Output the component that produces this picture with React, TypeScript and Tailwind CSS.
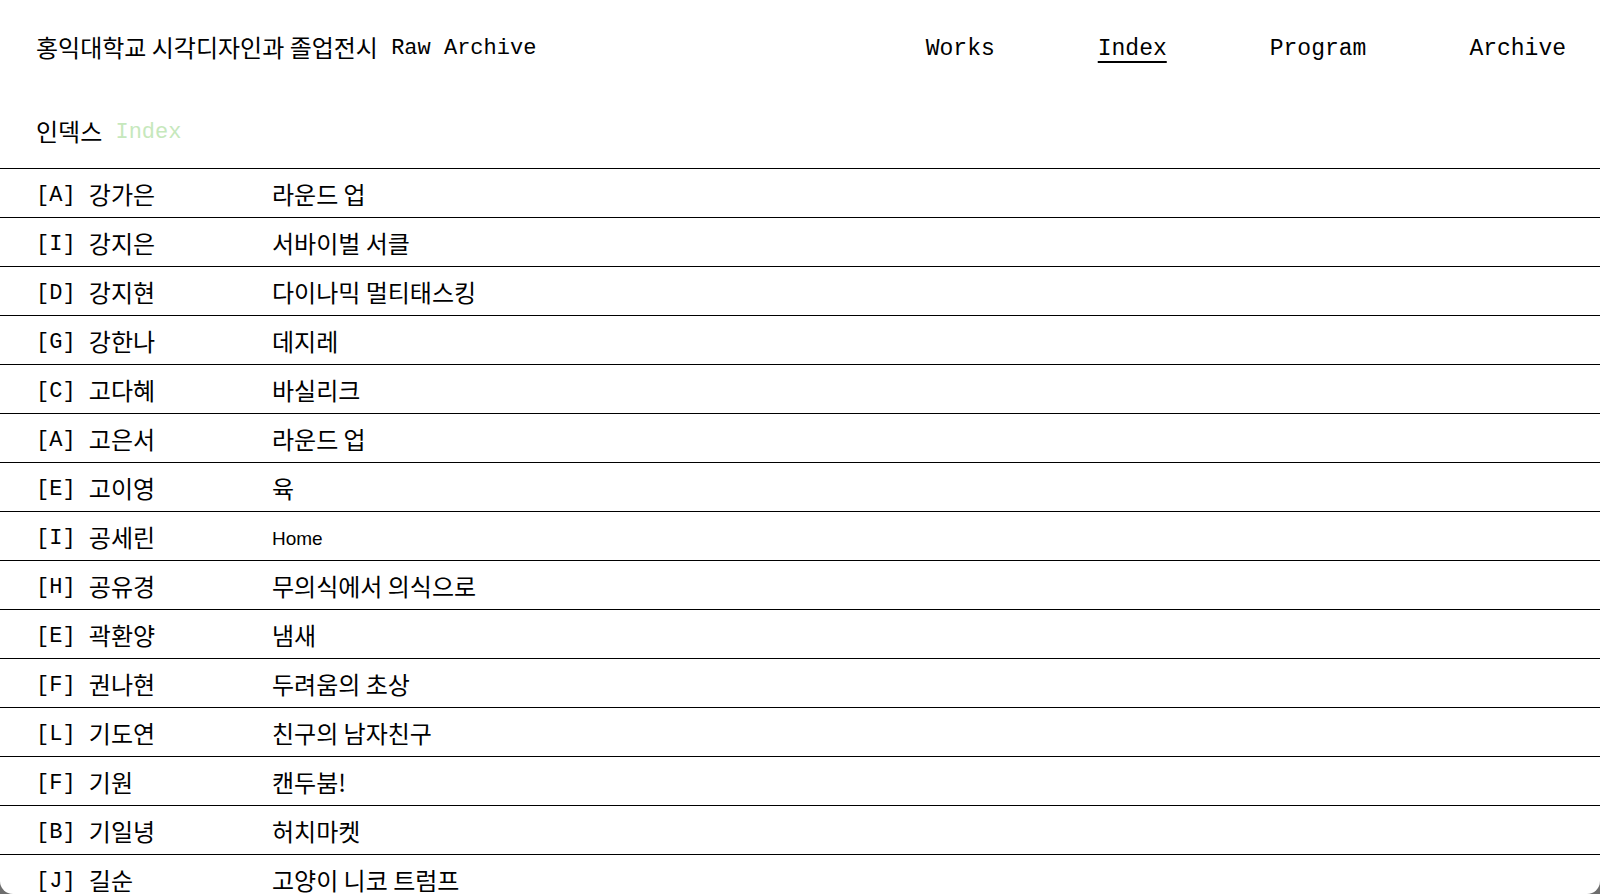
import React from "react";

const rows: [string, string, string][] = [
  ["A", "강가은", "라운드 업"],
  ["I", "강지은", "서바이벌 서클"],
  ["D", "강지현", "다이나믹 멀티태스킹"],
  ["G", "강한나", "데지레"],
  ["C", "고다혜", "바실리크"],
  ["A", "고은서", "라운드 업"],
  ["E", "고이영", "육"],
  ["I", "공세린", "Home"],
  ["H", "공유경", "무의식에서 의식으로"],
  ["E", "곽환양", "냄새"],
  ["F", "권나현", "두려움의 초상"],
  ["L", "기도연", "친구의 남자친구"],
  ["F", "기원", "캔두붐!"],
  ["B", "기일녕", "허치마켓"],
  ["J", "길순", "고양이 니코 트럼프"],
  ["K", "김가영", "마음의 온도"],
];

const mono = { fontFamily: '"Liberation Mono", "Noto Sans CJK KR", monospace' };
const sans = { fontFamily: '"Liberation Sans", "Noto Sans CJK KR", sans-serif' };
const kr = { fontFamily: '"Noto Sans CJK KR", sans-serif' };

const isLatin = (s: string) => /^[A-Za-z]+$/.test(s);

export default function App() {
  return (
    <div className="h-[894px] w-full bg-[#6e6e6e]">
      <div
        className="h-full w-full overflow-hidden rounded-b-[13px] bg-white text-black"
        style={mono}
      >
        <header className="flex h-[66px] items-end justify-between pl-[36px] pr-[34px]">
          <div className="flex h-[34px] items-center text-[22px] leading-[34px] whitespace-pre">
            <span className="mt-[-4px] text-[24px] leading-[34px]" style={kr}>
              홍익대학교 시각디자인과 졸업전시
            </span>
            <span> Raw Archive</span>
          </div>
          <nav className="flex h-[34px] items-center gap-[103px] text-[23px] leading-[34px]">
            <span>Works</span>
            <span className="underline decoration-2 underline-offset-[6px]">Index</span>
            <span>Program</span>
            <span>Archive</span>
          </nav>
        </header>
        <div className="flex h-[34px] items-center mt-[50px] mb-[18px] pl-[36px] text-[22px] leading-[34px] whitespace-pre">
          <span className="mt-[-4px] text-[24px] leading-[34px]" style={kr}>
            인덱스
          </span>
          <span className="text-[#c6e8bc]"> Index</span>
        </div>
        <div className="border-t border-black">
          {rows.map(([c, name, title], i) => (
            <div
              key={i}
              className="flex h-[49px] items-center border-b border-black pl-[36px] pt-[5px] text-[22px] leading-[34px]"
            >
              <div className="flex h-[34px] w-[236px] shrink-0 items-center whitespace-pre">
                <span>[{c}] </span>
                <span className="mt-[-4px] text-[24px] leading-[34px]" style={kr}>
                  {name}
                </span>
              </div>
              <div
                className={
                  isLatin(title)
                    ? "text-[19px] leading-[34px]"
                    : "mt-[-4px] text-[24px] leading-[34px]"
                }
                style={isLatin(title) ? sans : kr}
              >
                {title}
              </div>
            </div>
          ))}
        </div>
      </div>
    </div>
  );
}
